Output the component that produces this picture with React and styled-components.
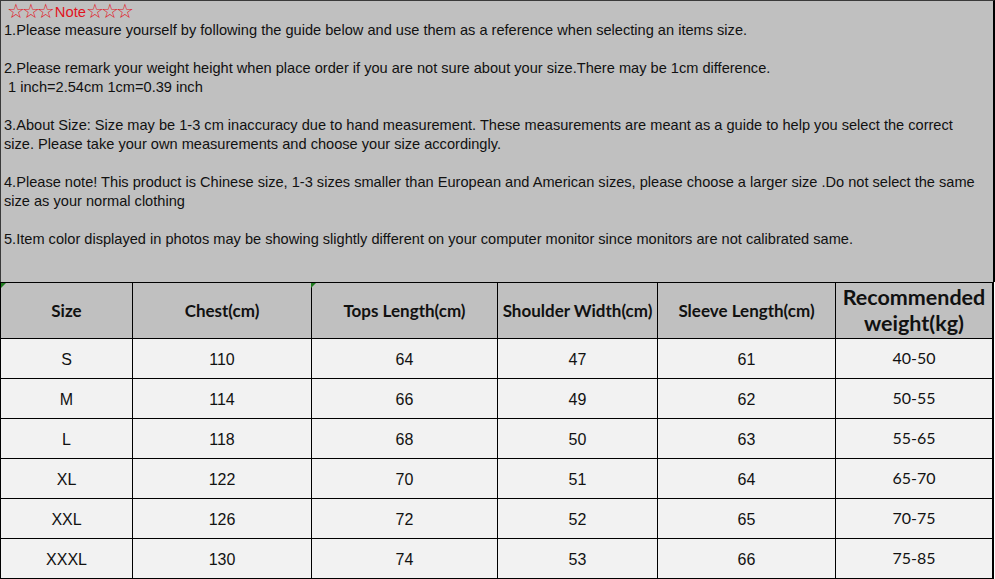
import React from "react";
import styled, { createGlobalStyle } from "styled-components";

const Global = createGlobalStyle`
  html, body { margin: 0; padding: 0; background: #ffffff; }
  body { font-family: "Liberation Sans", Arial, sans-serif; }
`;

const Page = styled.div`
  width: 995px;
  height: 579px;
  box-sizing: border-box;
  display: flex;
  flex-direction: column;
  overflow: hidden;
`;

const Notes = styled.section`
  box-sizing: border-box;
  height: 282px;
  background: #c0c0c0;
  border-top: 1px solid #3a3a3a;
  border-left: 1px solid #3a3a3a;
  border-right: 2px solid #000;
  width: 995px;
  padding: 1px 0 0 3px;
  font-family: "Liberation Sans", Arial, sans-serif;
  font-size: 14.6px;
  line-height: 19px;
  color: #111;
  white-space: nowrap;
`;

const Title = styled.div`
  color: #e0141e;
  font-size: 14.8px;
  padding-left: 3px;
  height: 19px;
  line-height: 19px;
  overflow: visible;
`;

const Stars = styled.span`
  font-family: "DejaVu Sans", sans-serif;
  font-size: 20px;
  letter-spacing: -3px;
  line-height: 19px;
  margin-right: ${(p) => (p.$before ? "3px" : "0")};
  vertical-align: -1px;
`;

const Para = styled.p`
  margin: 0 0 19px 0;
  white-space: pre;
`;

const Grid = styled.div`
  position: relative;
  display: grid;
  grid-template-columns: 132px 179px 186px 160px 178px 158px;
  grid-template-rows: 56px repeat(6, 40px);
  border-top: 1px solid #000;
  border-left: 1px solid #000;
  width: 994px;
  box-sizing: border-box;
`;

const Cell = styled.div`
  box-sizing: border-box;
  border-right: ${(p) => (p.$last ? "2px" : "1px")} solid #000;
  border-bottom: 1px solid #000;
  background: ${(p) => (p.$head ? "#c0c0c0" : "#f2f2f2")};
  display: flex;
  align-items: center;
  justify-content: center;
  text-align: center;
  color: #111;
  font-family: ${(p) =>
    p.$calibri ? 'Lato, "Open Sans", sans-serif' : '"Liberation Sans", Arial, sans-serif'};
  font-size: 16px;
  padding: ${(p) => (p.$calibri ? "0 0 3px 0" : "2px 0 0 0")};
`;

const HeadText = styled.span`
  font-family: Lato, "Open Sans", sans-serif;
  font-weight: 700;
  font-size: ${(p) => (p.$big ? "21.5px" : "17px")};
  line-height: ${(p) => (p.$big ? "26px" : "18px")};
  color: #111;
  margin-top: ${(p) => (p.$big ? "-3px" : "-1px")};
`;

const Marker = styled.span`
  position: absolute;
  top: 0;
  left: ${(p) => p.$x}px;
  width: 0;
  height: 0;
  border-top: 5px solid #1f7a1f;
  border-right: 5px solid transparent;
`;

const headers = [
  "Size",
  "Chest(cm)",
  "Tops Length(cm)",
  "Shoulder Width(cm)",
  "Sleeve Length(cm)",
];

const rows = [
  ["S", "110", "64", "47", "61", "40-50"],
  ["M", "114", "66", "49", "62", "50-55"],
  ["L", "118", "68", "50", "63", "55-65"],
  ["XL", "122", "70", "51", "64", "65-70"],
  ["XXL", "126", "72", "52", "65", "70-75"],
  ["XXXL", "130", "74", "53", "66", "75-85"],
];

const notes = [
  "1.Please measure yourself by following the guide below and use them as a reference when selecting an items size.",
  "2.Please remark your weight height when place order if you are not sure about your size.There may be 1cm difference.\n 1 inch=2.54cm 1cm=0.39 inch",
  "3.About Size: Size may be 1-3 cm inaccuracy due to hand measurement. These measurements are meant as a guide to help you select the correct\nsize. Please take your own measurements and choose your size accordingly.",
  "4.Please note! This product is Chinese size, 1-3 sizes smaller than European and American sizes, please choose a larger size .Do not select the same\nsize as your normal clothing",
  "5.Item color displayed in photos may be showing slightly different on your computer monitor since monitors are not calibrated same.",
];

export default function App() {
  return (
    <Page>
      <Global />
      <Notes>
        <Title>
          <Stars $before>☆☆☆</Stars>Note<Stars>☆☆☆</Stars>
        </Title>
        {notes.map((n) => (
          <Para key={n.slice(0, 2)}>{n}</Para>
        ))}
      </Notes>
      <Grid>
        {headers.map((h) => (
          <Cell key={h} $head>
            <HeadText>{h}</HeadText>
          </Cell>
        ))}
        <Cell $head $last>
          <HeadText $big>
            Recommended
            <br />
            weight(kg)
          </HeadText>
        </Cell>
        {rows.map((r) =>
          r.map((v, i) => (
            <Cell key={r[0] + i} $last={i === 5} $calibri={i === 5}>
              {v}
            </Cell>
          ))
        )}
        <Marker $x={0} />
        <Marker $x={310} />
      </Grid>
    </Page>
  );
}
